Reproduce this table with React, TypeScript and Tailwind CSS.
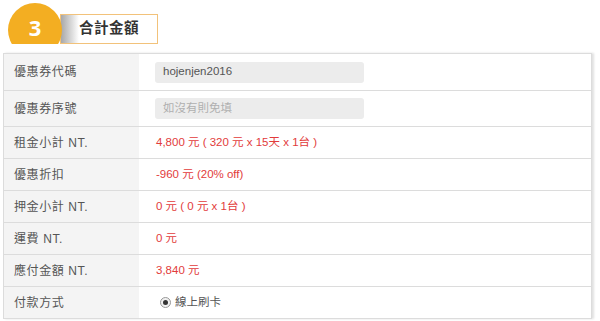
import React from "react";

const rows: { label: string; kind: "input" | "text" | "radio"; value: string; placeholder?: boolean }[] = [
  { label: "優惠券代碼", kind: "input", value: "hojenjen2016" },
  { label: "優惠券序號", kind: "input", value: "如沒有則免填", placeholder: true },
  { label: "租金小計 NT.", kind: "text", value: "4,800 元 ( 320 元 x 15天 x 1台 )" },
  { label: "優惠折扣", kind: "text", value: "-960 元 (20% off)" },
  { label: "押金小計 NT.", kind: "text", value: "0 元 ( 0 元 x 1台 )" },
  { label: "運費 NT.", kind: "text", value: "0 元" },
  { label: "應付金額 NT.", kind: "text", value: "3,840 元" },
  { label: "付款方式", kind: "radio", value: "線上刷卡" },
];

export default function App() {
  return (
    <div
      className="w-[600px] h-[321px] bg-white overflow-hidden"
      style={{ fontFamily: '"Liberation Sans", "Noto Sans CJK TC", Arial, sans-serif' }}
    >
      <div className="relative h-[53px] overflow-hidden">
        <div className="absolute left-[60px] top-[14px] w-[98px] h-[30px] border border-[#f2c27a] bg-white flex items-center pl-[18px] text-[14.5px] font-semibold text-[#333] tracking-[0.5px]">
          <div className="absolute left-0 top-0 bottom-0 w-[18px] bg-gradient-to-r from-[#a8a8a8] to-white" />
          <span className="relative">合計金額</span>
        </div>
        <div className="absolute left-0 top-0 w-[70px] h-[44px] overflow-hidden">
          <div className="absolute left-[8px] top-[3px] w-[54px] h-[54px] rounded-full bg-[#f3ae22] flex justify-center">
            <span className="mt-[8px] text-white text-[22px] font-bold" style={{ fontFamily: '"Open Sans", sans-serif' }}>3</span>
          </div>
        </div>
      </div>
      <div className="ml-[3px] w-[589px] border border-[#dcdcdc] shadow-[2px_0_2px_rgba(0,0,0,0.12)]">
        {rows.map((r, i) => (
          <div
            key={i}
            className={`flex ${r.kind === "input" ? "h-[36px]" : "h-[32px]"} ${i > 0 ? "border-t border-[#dcdcdc]" : ""}`}
          >
            <div className="w-[135px] bg-[#f4f4f4] flex items-center pl-[10px] text-[12px] text-[#555] tracking-[0.6px]">
              {r.label}
            </div>
            <div className="flex-1 flex items-center">
              {r.kind === "input" && (
                <div
                  className={`ml-[16px] w-[209px] h-[21px] rounded-[3px] bg-[#ececec] flex items-center pl-[8px] text-[11.5px] ${
                    r.placeholder ? "text-[#b0b0b0]" : "text-[#555]"
                  }`}
                >
                  {r.value}
                </div>
              )}
              {r.kind === "text" && (
                <span className="ml-[17px] text-[11.5px] text-[#e23b3b]">{r.value}</span>
              )}
              {r.kind === "radio" && (
                <div className="ml-[21px] flex items-center gap-[4px] text-[11.5px] text-[#555]">
                  <span className="w-[11px] h-[11px] rounded-full border border-[#999] bg-[#f0f0f0] flex items-center justify-center">
                    <span className="w-[5px] h-[5px] rounded-full bg-[#333]" />
                  </span>
                  <span>{r.value}</span>
                </div>
              )}
            </div>
          </div>
        ))}
      </div>
    </div>
  );
}
